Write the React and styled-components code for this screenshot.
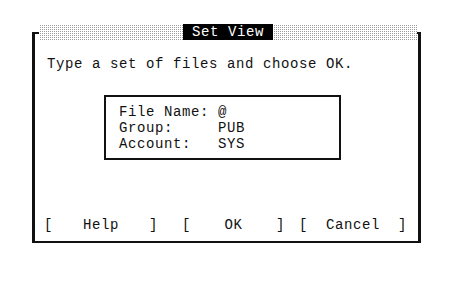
import React from "react";
import styled, { createGlobalStyle } from "styled-components";

const GlobalStyle = createGlobalStyle`
  * { box-sizing: border-box; }
  html, body {
    margin: 0;
    padding: 0;
    background: #fff;
  }
  body {
    font-family: "Liberation Mono", "DejaVu Sans Mono", monospace;
    font-size: 14px;
    letter-spacing: 0.6px;
    color: #111;
  }
`;

// styled components
const Page = styled.div`
  width: 467px;
  height: 299px;
  padding: 32px 0 0 32px;
`;

const Frame = styled.div`
  position: relative;
  width: 389px;
  height: 211px;
  border-style: solid;
  border-color: #111;
  border-width: 2px 3px 2px 3px;
  display: flex;
  flex-direction: column;
`;

const TitleBand = styled.div`
  position: absolute;
  top: -10px;
  left: 4px;
  width: 378px;
  height: 16px;
  display: flex;
  justify-content: center;
  background-color: #fff;
  background-image: linear-gradient(90deg, #fff 1px, transparent 1px),
    linear-gradient(#fff 1px, #9c9c9c 1px);
  background-size: 2px 2px;
`;

const Title = styled.div`
  width: 90px;
  height: 16px;
  background: #000;
  color: #fff;
  line-height: 16px;
  padding-left: 9px;
  white-space: pre;
`;

const Message = styled.div`
  margin-top: 22px;
  padding-left: 12px;
  line-height: 16px;
  white-space: pre;
`;

const FieldBox = styled.div`
  margin: 23px 0 0 69px;
  width: 237px;
  height: 65px;
  border: 2px solid #111;
  padding: 7px 0 0 13px;
  display: flex;
  flex-direction: column;
`;

const Field = styled.div`
  display: grid;
  grid-template-columns: 99px auto;
  line-height: 16px;
`;

const ButtonRow = styled.div`
  margin-top: auto;
  margin-bottom: 8px;
  padding-left: 9px;
  display: flex;
  line-height: 16px;
`;

const Button = styled.div`
  width: ${(props) => props.width}px;
  margin-right: ${(props) => props.gap || 0}px;
  display: grid;
  grid-template-columns: 9px 1fr 9px;

  .label {
    text-align: center;
  }
`;

const fields = [
  { label: "File Name:", value: "@" },
  { label: "Group:", value: "PUB" },
  { label: "Account:", value: "SYS" },
];

const buttons = [
  { label: "Help", width: 114, gap: 24 },
  { label: "OK", width: 103, gap: 14 },
  { label: "Cancel", width: 108 },
];

const App = () => {
  return (
    <Page>
      <GlobalStyle />
      <Frame>
        <TitleBand>
          <Title>Set View</Title>
        </TitleBand>
        <Message>Type a set of files and choose OK.</Message>
        <FieldBox>
          {fields.map((f) => (
            <Field key={f.label}>
              <span>{f.label}</span>
              <span>{f.value}</span>
            </Field>
          ))}
        </FieldBox>
        <ButtonRow>
          {buttons.map((b) => (
            <Button key={b.label} width={b.width} gap={b.gap}>
              <span>[</span>
              <span className="label">{b.label}</span>
              <span>]</span>
            </Button>
          ))}
        </ButtonRow>
      </Frame>
    </Page>
  );
};

export default App;
